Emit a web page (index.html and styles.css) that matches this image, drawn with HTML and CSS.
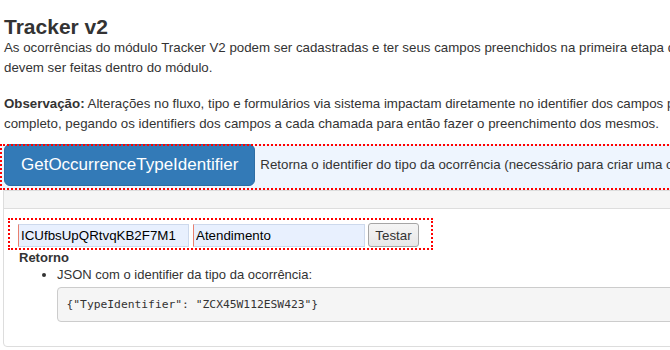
FILE: index.html
```html
<!DOCTYPE html>
<html lang="pt-BR">
<head>
<meta charset="utf-8">
<title>Tracker v2</title>
<link rel="stylesheet" href="styles.css">
</head>
<body>
<div class="page">
  <h3 class="title">Tracker v2</h3>
  <p class="intro">As ocorrências do módulo Tracker V2 podem ser cadastradas e ter seus campos preenchidos na primeira etapa do fluxo, as demais alterações<br>devem ser feitas dentro do módulo.</p>
  <p class="intro note"><strong>Observação:</strong> Alterações no fluxo, tipo e formulários via sistema impactam diretamente no identifier dos campos por isso recomendamos um fluxo<br>completo, pegando os identifiers dos campos a cada chamada para então fazer o preenchimento dos mesmos.</p>

  <div class="op-row">
    <button class="op-btn" type="button">GetOccurrenceTypeIdentifier</button>
    <span class="op-desc">Retorna o identifier do tipo da ocorrência (necessário para criar uma ocorrência)</span>
  </div>

  <div class="panel">
    <div class="panel-heading"></div>
    <div class="panel-body">
      <form class="try-form">
        <input class="field field-a" type="text" value="ICUfbsUpQRtvqKB2F7M1">
        <input class="field field-b" type="text" value="Atendimento">
        <button class="test-btn" type="button">Testar</button>
      </form>
      <div class="result">
        <div class="result-title">Retorno</div>
        <ul class="result-list">
          <li>JSON com o identifier da tipo da ocorrência:
            <pre class="code">{"TypeIdentifier": "ZCX45W112ESW423"}</pre>
          </li>
        </ul>
      </div>
    </div>
  </div>
</div>
</body>
</html>
```

FILE: styles.css
```css
html, body {
  margin: 0;
  padding: 0;
  overflow: hidden;
  background: #fff;
}

body {
  font-family: "Liberation Sans", Arial, sans-serif;
  color: #333;
  font-size: 13px;
}

.page {
  width: 1100px;
}

.title {
  margin: 15px 0 0 4px;
  font-size: 21px;
  line-height: 23px;
  font-weight: bold;
  color: #333;
}

.intro {
  margin: 0 0 16px 4px;
  font-size: 13.3px;
  line-height: 20px;
  white-space: nowrap;
}

.note {
  margin-bottom: 10px;
}

.op-row {
  display: flex;
  align-items: flex-start;
  height: 46px;
  padding-left: 4px;
  background: #eef5fe;
  outline: 2px dotted #ff0000;
  outline-offset: -2px;
}

.op-btn {
  height: 42px;
  padding: 0 16px;
  border: 1px solid #2e6da4;
  border-radius: 6px;
  background: #337ab7;
  color: #fff;
  font-family: "Liberation Sans", Arial, sans-serif;
  font-size: 17px;
  line-height: 40px;
}

.op-desc {
  margin-left: 5px;
  font-size: 13.3px;
  line-height: 42px;
  white-space: nowrap;
  color: #333;
}

.panel {
  margin-left: 3px;
  border: 1px solid #ddd;
  border-radius: 0 0 4px 4px;
}

.panel-heading {
  height: 17px;
  background: #f5f5f5;
  border-bottom: 1px solid #ddd;
}

.panel-body {
  padding: 11px 0 24px 0;
}

.try-form {
  display: flex;
  align-items: flex-end;
  box-sizing: border-box;
  width: 421px;
  height: 28px;
  margin: 0 0 0 6px;
  padding: 0 0 1px 8px;
  outline: 2px dotted #ff0000;
}

.field {
  box-sizing: border-box;
  height: 23px;
  padding: 0 2px;
  border: 1px solid #cdd9ec;
  border-left-color: #e9806f;
  background: #e8f0fe;
  color: #000;
  font-family: "Liberation Sans", Arial, sans-serif;
  font-size: 13.33px;
}

.field-a {
  width: 171px;
}

.field-b {
  width: 172px;
  margin-left: 4px;
}

.test-btn {
  box-sizing: border-box;
  width: 51px;
  height: 24px;
  margin-left: 3px;
  padding: 0;
  border: 1px solid #a6a6a6;
  border-radius: 3px;
  background: linear-gradient(#f5f5f5, #e7e7e7);
  color: #333;
  font-family: "Liberation Sans", Arial, sans-serif;
  font-size: 13.33px;
}

.result {
  margin-top: 1px;
  padding-left: 15px;
}

.result-title {
  font-weight: bold;
  line-height: 17px;
}

.result-list {
  margin: 0;
  padding-left: 38px;
  line-height: 17px;
}

.code {
  margin: 4px 0 0 0;
  padding: 9px 8.5px;
  border: 1px solid #ccc;
  border-radius: 4px;
  background: #f5f5f5;
  font-family: "DejaVu Sans Mono", monospace;
  font-size: 11.3px;
  line-height: 15px;
  color: #333;
  white-space: pre;
}
```
